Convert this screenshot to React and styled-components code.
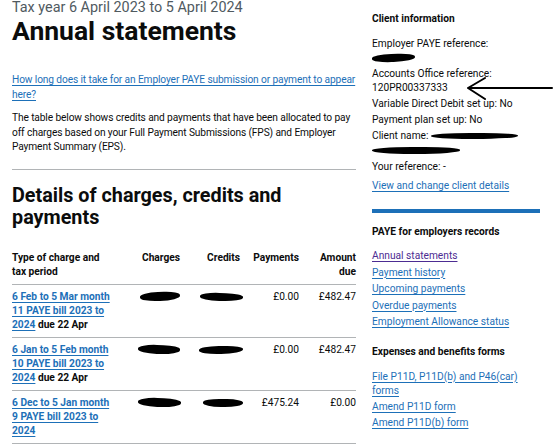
import React from "react";
import styled, { createGlobalStyle } from "styled-components";

const GlobalStyle = createGlobalStyle`
  html, body { margin: 0; padding: 0; background: #ffffff; overflow: hidden; }
  body {
    font-family: Roboto, "Liberation Sans", sans-serif;
    color: #0b0c0c;
    -webkit-font-smoothing: antialiased;
  }
  *, *::before, *::after { box-sizing: border-box; }
`;

const Page = styled.div`
  display: grid;
  grid-template-columns: 344px 168px;
  column-gap: 16px;
  padding: 0 12px;
  align-items: start;
`;

const Main = styled.main`
  display: flex;
  flex-direction: column;
  min-width: 0;
`;

const Caption = styled.span`
  display: block;
  font-size: 14.4px;
  line-height: 16px;
  color: #505a5f;
`;

const Title = styled.h1`
  margin: 0 0 27px;
  font-size: 26.5px;
  line-height: 30px;
  font-weight: 700;
`;

const Body = styled.p`
  margin: 0 0 ${(p) => p.$mb ?? 9}px;
  font-size: 10.2px;
  line-height: 14.5px;
  letter-spacing: -0.12px;
`;

const Link = styled.a`
  color: ${(p) => (p.$visited ? "#4c2c92" : "#1d70b8")};
  text-decoration: underline;
  text-decoration-thickness: 1px;
  text-underline-offset: 0.15em;
  font-weight: ${(p) => (p.$bold ? 700 : 400)};
`;

const Rule = styled.hr`
  margin: 14px 0 15px;
  border: 0;
  border-top: 1px solid #b1b4b6;
  width: 100%;
`;

const SectionTitle = styled.h2`
  margin: 0 0 17px;
  font-size: 19.8px;
  line-height: 22px;
  font-weight: 700;
`;

const Table = styled.table`
  border-collapse: collapse;
  width: 344px;
  table-layout: fixed;
  font-size: 10.2px;
  line-height: 14px;
`;

const Th = styled.th`
  text-align: ${(p) => (p.$numeric ? "right" : "left")};
  vertical-align: top;
  font-weight: 700;
  padding: 5px ${(p) => p.$pr ?? 12}px 5px 0;
  border-bottom: 1px solid #b1b4b6;
  width: ${(p) => p.$w}px;
`;

const Td = styled.td`
  text-align: ${(p) => (p.$numeric ? "right" : "left")};
  vertical-align: top;
  padding: 5px ${(p) => p.$pr ?? 12}px 5px 0;
  border-bottom: 1px solid #b1b4b6;
`;

const Due = styled.span`
  font-weight: 700;
`;

const Redact = styled.span`
  display: inline-block;
  width: ${(p) => p.$w}px;
  height: ${(p) => p.$h ?? 8}px;
  margin-right: ${(p) => p.$mr ?? 0}px;
  background: #000;
  border-radius: 45% 40% 50% 45%;
  vertical-align: middle;
  transform: rotate(${(p) => p.$rot ?? 0}deg);
`;

const Aside = styled.aside`
  display: flex;
  flex-direction: column;
  padding-top: 12px;
`;

const AsideHeading = styled.h3`
  margin: 0 0 ${(p) => p.$mb ?? 10}px;
  font-size: 10.2px;
  line-height: 14px;
  font-weight: 700;
`;

const Info = styled.p`
  position: relative;
  margin: 0 0 ${(p) => p.$mb ?? 2}px;
  font-size: 10.2px;
  line-height: 14px;
`;

const Section = styled.div`
  border-top: 4px solid #1d70b8;
  margin-top: ${(p) => p.$mt ?? 0}px;
  padding-top: 12px;
`;

const LinkList = styled.ul`
  list-style: none;
  margin: 0 0 ${(p) => p.$mb ?? 0}px;
  padding: 0;
  display: flex;
  flex-direction: column;
  gap: ${(p) => p.$gap ?? 2}px;
  font-size: 10.2px;
  line-height: 14.5px;
`;

const Arrow = styled.svg`
  position: absolute;
  left: 94px;
  top: 9px;
  width: 86px;
  height: 26px;
  overflow: visible;
`;

const rows = [
  {
    link: "6 Feb to 5 Mar month 11 PAYE bill 2023 to 2024",
    due: "due 22 Apr",
    c1: { w: 40, h: 9, rot: -2 },
    c2: { w: 43, h: 8, rot: 2 },
    payments: "£0.00",
    amount: "£482.47",
  },
  {
    link: "6 Jan to 5 Feb month 10 PAYE bill 2023 to 2024",
    due: "due 22 Apr",
    c1: { w: 42, h: 9, rot: 2 },
    c2: { w: 44, h: 8, rot: -1 },
    payments: "£0.00",
    amount: "£482.47",
  },
  {
    link: "6 Dec to 5 Jan month 9 PAYE bill 2023 to 2024",
    due: null,
    c1: { w: 43, h: 9, rot: 2 },
    c2: { w: 40, h: 8, rot: 1 },
    payments: "£475.24",
    amount: "£0.00",
  },
];

export default function App() {
  return (
    <>
      <GlobalStyle />
      <Page>
        <Main>
          <Caption>Tax year 6 April 2023 to 5 April 2024</Caption>
          <Title>Annual statements</Title>
          <Body>
            <Link href="#">
              How long does it take for an Employer PAYE submission or payment to appear here?
            </Link>
          </Body>
          <Body $mb={0}>
            The table below shows credits and payments that have been allocated to pay off
            charges based on your Full Payment Submissions (FPS) and Employer Payment Summary
            (EPS).
          </Body>
          <Rule />
          <SectionTitle>Details of charges, credits and payments</SectionTitle>
          <Table>
            <thead>
              <tr>
                <Th $w={126} $pr={31}>Type of charge and tax period</Th>
                <Th $w={54} $numeric>Charges</Th>
                <Th $w={60} $numeric>Credits</Th>
                <Th $w={59} $numeric>Payments</Th>
                <Th $w={45} $numeric $pr={0}>Amount due</Th>
              </tr>
            </thead>
            <tbody>
              {rows.map((r) => (
                <tr key={r.link}>
                  <Td $pr={22}>
                    <Link href="#" $bold>{r.link}</Link>
                    {r.due && (
                      <>
                        {" "}
                        <Due>{r.due}</Due>
                      </>
                    )}
                  </Td>
                  <Td $numeric>
                    <Redact $w={r.c1.w} $h={r.c1.h} $rot={r.c1.rot} />
                  </Td>
                  <Td $numeric>
                    <Redact $w={r.c2.w} $h={r.c2.h} $rot={r.c2.rot} $mr={-3} />
                  </Td>
                  <Td $numeric>{r.payments}</Td>
                  <Td $numeric $pr={0}>{r.amount}</Td>
                </tr>
              ))}
            </tbody>
          </Table>
        </Main>
        <Aside>
          <AsideHeading $mb={11}>Client information</AsideHeading>
          <Info>
            Employer PAYE reference:
            <br />
            <Redact $w={43} $h={8} $rot={-2} />
          </Info>
          <Info>
            Accounts Office reference:
            <br />
            120PR00337333
            <Arrow viewBox="0 0 86 26">
              <path
                d="M2 12 L86 12 M2 12 L19 2 M2 12 L19 23"
                stroke="#000"
                strokeWidth="2"
                fill="none"
                strokeLinecap="round"
              />
            </Arrow>
          </Info>
          <Info>Variable Direct Debit set up: No</Info>
          <Info>Payment plan set up: No</Info>
          <Info $mb={3}>
            Client name: <Redact $w={87} $h={6} />
            <br />
            <Redact $w={88} $h={7} />
          </Info>
          <Info $mb={5}>Your reference: -</Info>
          <Info>
            <Link href="#">View and change client details</Link>
          </Info>
          <Section $mt={14}>
            <AsideHeading $mb={10}>PAYE for employers records</AsideHeading>
            <LinkList $mb={15}>
              <li><Link href="#" $visited>Annual statements</Link></li>
              <li><Link href="#">Payment history</Link></li>
              <li><Link href="#">Upcoming payments</Link></li>
              <li><Link href="#">Overdue payments</Link></li>
              <li><Link href="#">Employment Allowance status</Link></li>
            </LinkList>
            <AsideHeading $mb={11}>Expenses and benefits forms</AsideHeading>
            <LinkList $gap={1.5}>
              <li><Link href="#">File P11D, P11D(b) and P46(car) forms</Link></li>
              <li><Link href="#">Amend P11D form</Link></li>
              <li><Link href="#">Amend P11D(b) form</Link></li>
            </LinkList>
          </Section>
        </Aside>
      </Page>
    </>
  );
}
